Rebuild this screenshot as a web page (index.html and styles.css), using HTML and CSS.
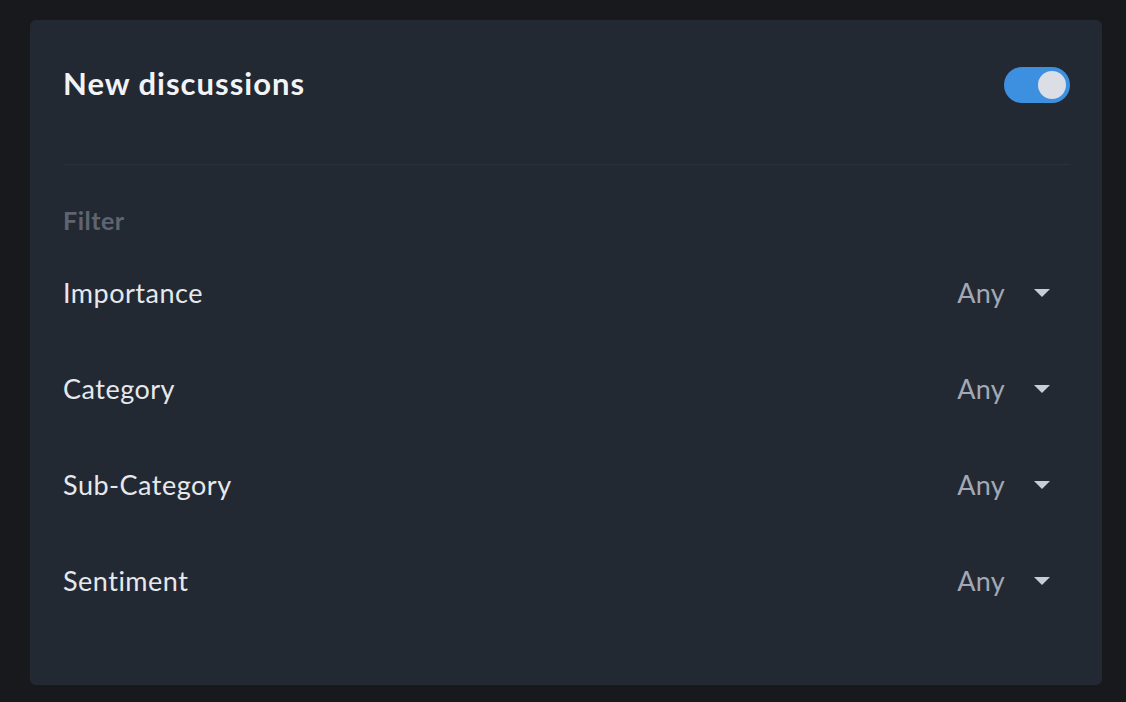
FILE: index.html
```html
<!DOCTYPE html>
<html>
<head>
<meta charset="utf-8">
<link rel="stylesheet" href="styles.css">
</head>
<body>
<div class="card">
  <div class="header">
    <h1 class="title">New discussions</h1>
    <div class="toggle on"><span class="knob"></span></div>
  </div>
  <div class="divider"></div>
  <div class="filter-label">Filter</div>
  <div class="rows">
    <div class="row"><span class="name">Importance</span><span class="select"><span class="value">Any</span><svg class="caret" width="16" height="8" viewBox="0 0 16 8"><path d="M0 0H16L8 8Z" fill="#c9ccd4"/></svg></span></div>
    <div class="row"><span class="name">Category</span><span class="select"><span class="value">Any</span><svg class="caret" width="16" height="8" viewBox="0 0 16 8"><path d="M0 0H16L8 8Z" fill="#c9ccd4"/></svg></span></div>
    <div class="row"><span class="name">Sub-Category</span><span class="select"><span class="value">Any</span><svg class="caret" width="16" height="8" viewBox="0 0 16 8"><path d="M0 0H16L8 8Z" fill="#c9ccd4"/></svg></span></div>
    <div class="row"><span class="name">Sentiment</span><span class="select"><span class="value">Any</span><svg class="caret" width="16" height="8" viewBox="0 0 16 8"><path d="M0 0H16L8 8Z" fill="#c9ccd4"/></svg></span></div>
  </div>
</div>
</body>
</html>
```
FILE: styles.css
```css
html, body {
  margin: 0;
  padding: 0;
  background: #18191c;
}
body {
  padding: 20px 24px 17px 30px;
  font-family: Lato, "Noto Sans", sans-serif;
}
.card {
  width: 1072px;
  height: 665px;
  box-sizing: border-box;
  background: #232933;
  border-radius: 6px;
  padding: 47px 32px 0 33px;
}
.header {
  display: flex;
  align-items: center;
  justify-content: space-between;
  height: 36px;
}
.title {
  margin: 0;
  font-size: 31px;
  font-weight: 700;
  color: #f1f3f6;
  line-height: 36px;
  position: relative;
  top: -2px;
  letter-spacing: 1px;
}
.toggle {
  width: 66px;
  height: 36px;
  border-radius: 18px;
  background: #3d8fe0;
  box-sizing: border-box;
  padding: 4px;
  display: flex;
  justify-content: flex-end;
}
.knob {
  width: 28px;
  height: 28px;
  border-radius: 50%;
  background: #dcdee5;
}
.divider {
  height: 1px;
  background: #2b303a;
  margin-top: 61px;
}
.filter-label {
  margin-top: 40px;
  font-size: 25px;
  font-weight: 700;
  line-height: 30px;
  color: #5f6570;
  letter-spacing: 0.5px;
}
.rows {
  margin-top: 9px;
}
.row {
  height: 96px;
  display: flex;
  align-items: center;
  justify-content: space-between;
}
.name {
  font-size: 27px;
  color: #e6e8ec;
  font-weight: 400;
  letter-spacing: 0.5px;
}
.select {
  display: flex;
  align-items: center;
  margin-right: 20px;
}
.value {
  font-size: 27px;
  color: #a3a8b4;
  margin-right: 29px;
  letter-spacing: 0.3px;
}
.caret {
  display: block;
  position: relative;
  top: 1px;
}
```
